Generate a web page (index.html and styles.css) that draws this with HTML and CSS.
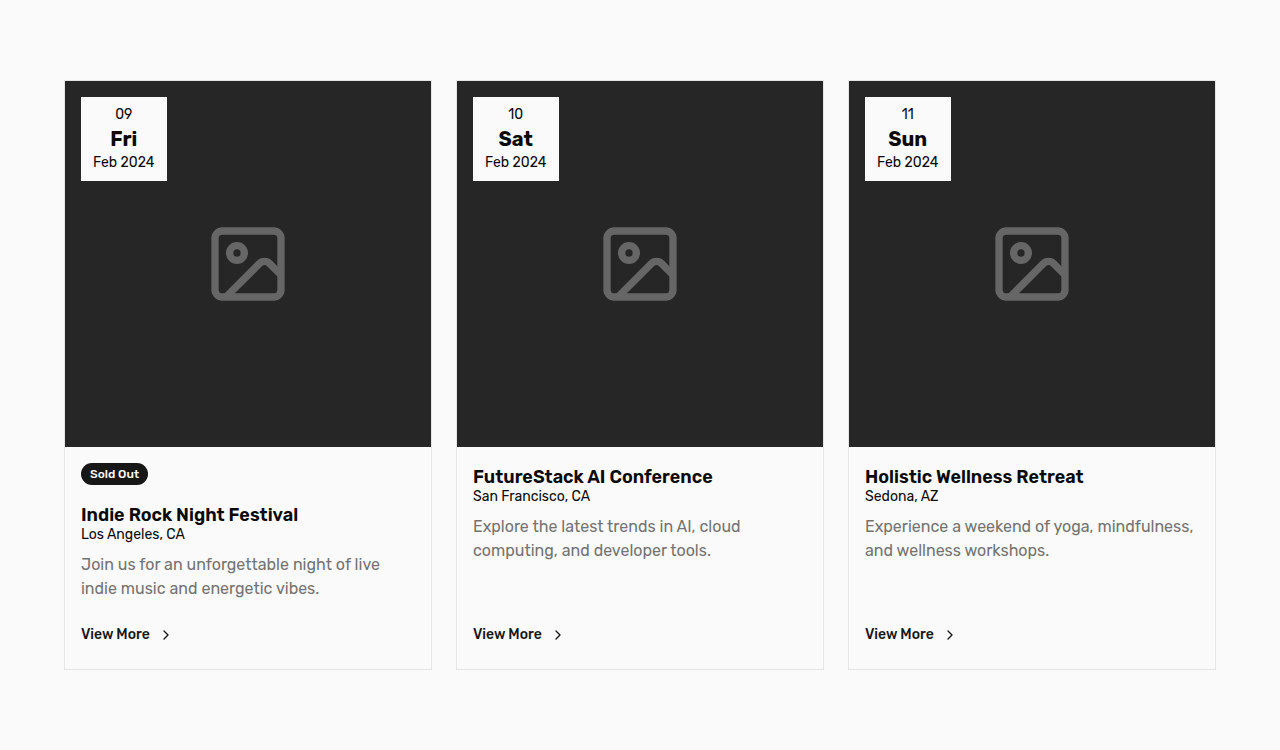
FILE: index.html
```html
<!DOCTYPE html>
<html lang="en">

<head>
    <meta charset="UTF-8">
    <meta name="viewport" content="width=device-width, initial-scale=1.0">
    <title>Events</title>
    <link rel="stylesheet" href="styles.css">
</head>

<body>
    <!-- shared icons -->
    <svg class="sprite" aria-hidden="true">
        <symbol id="icon-image" viewBox="0 0 24 24">
            <rect x="3" y="3" width="18" height="18" rx="2" />
            <circle cx="9" cy="9" r="2" />
            <path stroke-linecap="butt" d="m21 15-3.086-3.086a2 2 0 0 0-2.828 0L6 21" />
        </symbol>
        <symbol id="icon-chevron" viewBox="0 0 24 24">
            <path d="m9 18 6-6-6-6" />
        </symbol>
    </svg>

    <main class="events">
        <article class="card">
            <div class="card-image">
                <svg class="placeholder" aria-hidden="true"><use href="#icon-image" /></svg>
                <time class="date" datetime="2024-02-09">
                    <span>09</span>
                    <strong>Fri</strong>
                    <span>Feb 2024</span>
                </time>
            </div>
            <div class="card-body">
                <span class="badge">Sold Out</span>
                <h2>Indie Rock Night Festival</h2>
                <p class="location">Los Angeles, CA</p>
                <p class="description">Join us for an unforgettable night of live indie music and energetic vibes.</p>
                <a class="more" href="#">View More <svg aria-hidden="true"><use href="#icon-chevron" /></svg></a>
            </div>
        </article>

        <article class="card">
            <div class="card-image">
                <svg class="placeholder" aria-hidden="true"><use href="#icon-image" /></svg>
                <time class="date" datetime="2024-02-10">
                    <span>10</span>
                    <strong>Sat</strong>
                    <span>Feb 2024</span>
                </time>
            </div>
            <div class="card-body">
                <h2>FutureStack AI Conference</h2>
                <p class="location">San Francisco, CA</p>
                <p class="description">Explore the latest trends in AI, cloud computing, and developer tools.</p>
                <a class="more" href="#">View More <svg aria-hidden="true"><use href="#icon-chevron" /></svg></a>
            </div>
        </article>

        <article class="card">
            <div class="card-image">
                <svg class="placeholder" aria-hidden="true"><use href="#icon-image" /></svg>
                <time class="date" datetime="2024-02-11">
                    <span>11</span>
                    <strong>Sun</strong>
                    <span>Feb 2024</span>
                </time>
            </div>
            <div class="card-body">
                <h2>Holistic Wellness Retreat</h2>
                <p class="location">Sedona, AZ</p>
                <p class="description">Experience a weekend of yoga, mindfulness, and wellness workshops.</p>
                <a class="more" href="#">View More <svg aria-hidden="true"><use href="#icon-chevron" /></svg></a>
            </div>
        </article>
    </main>
</body>

</html>
```
FILE: styles.css
```css
*
{
    box-sizing: border-box;
}

body
{
    margin: 0;
    color: #0a0a0a;
    background-color: #fafafa;
    font-family: Rubik, Inter, sans-serif;
    font-size: 16px;
    line-height: 24px;
}

h2,
p
{
    margin: 0;
}

.sprite
{
    display: none;
}

.events
{
    display: grid;
    grid-template-columns: repeat(3, 1fr);
    gap: 24px;
    padding: 80px 64px;
}

.card
{
    display: flex;
    flex-direction: column;
    border: 1px solid #e5e5e5;
}

.card-image
{
    position: relative;
    display: flex;
    align-items: center;
    justify-content: center;
    aspect-ratio: 1;
    background-color: #262626;
}

.placeholder
{
    width: 88px;
    height: 88px;
    fill: none;
    stroke: #666;
    stroke-width: 2;
    stroke-linecap: round;
    stroke-linejoin: round;
}

.date
{
    position: absolute;
    top: 16px;
    left: 16px;
    display: flex;
    flex-direction: column;
    align-items: center;
    padding: 8px 12px;
    background-color: #fafafa;
    font-size: 14px;
    line-height: 20px;
}

.date strong
{
    font-size: 20px;
    line-height: 28px;
}

.card-body
{
    flex: 1;
    display: flex;
    flex-direction: column;
    align-items: flex-start;
    padding: 16px;
}

.badge
{
    margin-bottom: 16px;
    padding: 3px 9px;
    border-radius: 11px;
    color: #fafafa;
    background-color: #171717;
    font-size: 12px;
    font-weight: 500;
    line-height: 16px;
}

.card-body h2
{
    padding-top: 4px;
    font-size: 18px;
    font-weight: 600;
    line-height: 20px;
}

.location
{
    font-size: 14px;
    line-height: 20px;
}

.description
{
    margin: 8px 0 16px;
    color: #737373;
}

.more
{
    display: flex;
    align-items: center;
    gap: 8px;
    height: 36px;
    margin-top: auto;
    color: #171717;
    font-size: 14px;
    font-weight: 500;
    text-decoration: none;
}

.more svg
{
    width: 16px;
    height: 16px;
    fill: none;
    stroke: currentColor;
    stroke-width: 2;
    stroke-linecap: round;
    stroke-linejoin: round;
}

@media (max-width: 900px)
{
    .events
    {
        grid-template-columns: 1fr;
        padding: 40px 24px;
    }
}
```
